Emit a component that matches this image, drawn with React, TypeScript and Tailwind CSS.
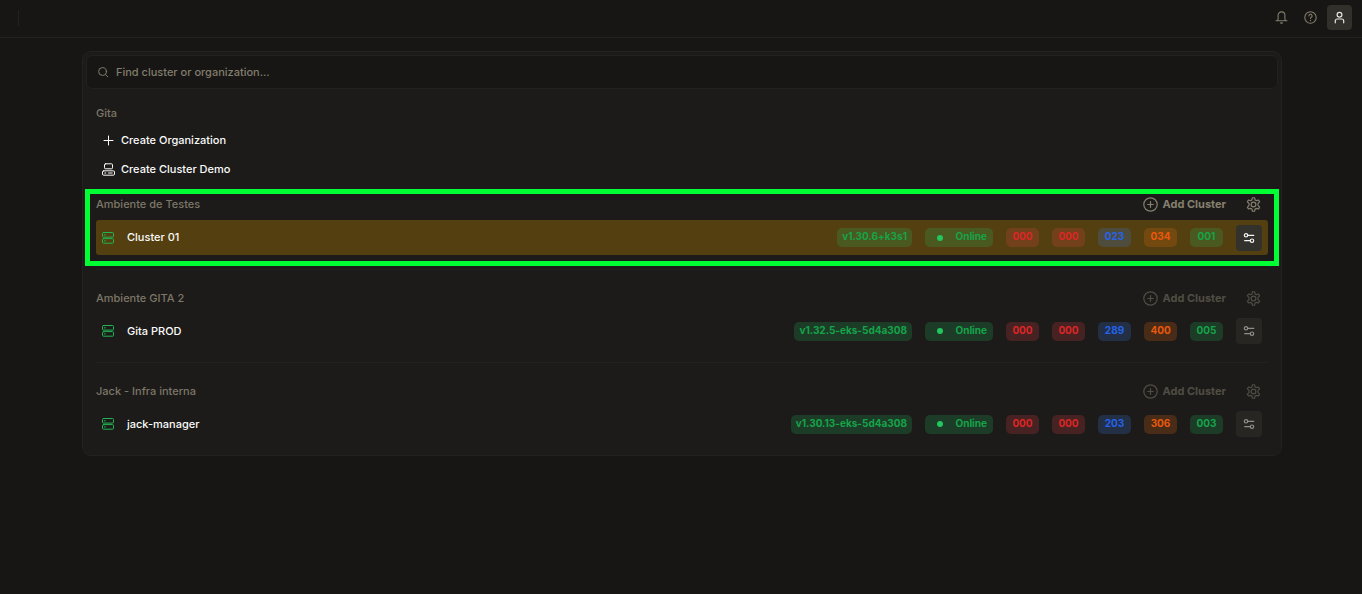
import React from "react";

type IconProps = { className?: string };

const stroke = {
  fill: "none",
  stroke: "currentColor",
  strokeWidth: 1,
  strokeLinecap: "round" as const,
  strokeLinejoin: "round" as const,
  "aria-hidden": true,
};

function BellIcon({ className }: IconProps) {
  return (
    <svg viewBox="0 0 13 13" className={className} {...stroke} strokeWidth={1.1}>
      <path d="M1 9.7h11M2.4 9.6c.5-.6.7-1.3.7-2.2V4.3a3.4 3.4 0 0 1 6.8 0v3.1c0 .9.2 1.6.7 2.2" />
      <path d="M5.9 12h1.2" strokeWidth="1.5" />
    </svg>
  );
}

function HelpIcon({ className }: IconProps) {
  return (
    <svg viewBox="0 0 13 13" className={className} {...stroke} strokeWidth={1.1}>
      <circle cx="6.5" cy="6.5" r="5.7" />
      <path d="M4.9 5a1.6 1.6 0 1 1 2.4 1.3c-.5.3-.8.5-.8 1.1" />
      <path d="M6.5 9.4v.1" strokeWidth="1.3" />
    </svg>
  );
}

function UserIcon({ className }: IconProps) {
  return (
    <svg viewBox="0 0 13 13" className={className} {...stroke} strokeWidth={1.2}>
      <circle cx="6.5" cy="3.7" r="2.4" />
      <path d="M2.3 11.8V10a2 2 0 0 1 2-2h4.4a2 2 0 0 1 2 2v1.8" />
    </svg>
  );
}

function SearchIcon({ className }: IconProps) {
  return (
    <svg viewBox="0 0 12 12" className={className} {...stroke}>
      <circle cx="5.5" cy="5.5" r="3.9" />
      <path d="M8.5 8.5l2.3 2.3" />
    </svg>
  );
}

function PlusIcon({ className }: IconProps) {
  return (
    <svg viewBox="0 0 13 13" className={className} {...stroke}>
      <path d="M6.5 2v9M2 6.5h9" />
    </svg>
  );
}

function ComputerIcon({ className }: IconProps) {
  return (
    <svg viewBox="0 0 13 13" className={className} {...stroke}>
      <rect x="2.5" y="0.8" width="8" height="5" rx="1" />
      <rect x="0.5" y="7.8" width="12" height="4.4" rx="1.2" />
      <path d="M2.8 10h1M6.5 10h3.7" />
    </svg>
  );
}

function ServerIcon({ className }: IconProps) {
  return (
    <svg viewBox="0 0 12 12" className={className} {...stroke}>
      <rect x="0.5" y="0.5" width="11" height="4.6" rx="1" />
      <rect x="0.5" y="6.6" width="11" height="4.6" rx="1" />
      <path d="M2.5 2.8h.8M2.5 8.9h.8" />
    </svg>
  );
}

function CirclePlusIcon({ className }: IconProps) {
  return (
    <svg viewBox="0 0 15 15" className={className} {...stroke} strokeWidth={1.2}>
      <circle cx="7.5" cy="7.5" r="6.7" />
      <path d="M7.5 4.7v5.6M4.7 7.5h5.6" />
    </svg>
  );
}

function GearIcon({ className }: IconProps) {
  return (
    <svg viewBox="0 0 24 24" className={className} {...stroke} strokeWidth={1.9}>
      <path d="M9.5 4.6 10.3 1.2h3.4l.8 3.4 2.2 1.3 3.4-1.1 1.7 3-2.6 2.5v3.4l2.6 2.5-1.7 3-3.4-1.1-2.2 1.3-.8 3.4h-3.4l-.8-3.4-2.2-1.3-3.4 1.1-1.7-3 2.6-2.5v-3.4L2.2 7.8l1.7-3 3.4 1.1z" />
      <circle cx="12" cy="12" r="3.8" />
    </svg>
  );
}

function SlidersIcon({ className }: IconProps) {
  return (
    <svg viewBox="0 0 12 12" className={className} {...stroke} strokeWidth={1.2}>
      <circle cx="3" cy="3.3" r="1.7" />
      <path d="M4.9 3.3h5.9M1.7 8.7h5.4" />
      <circle cx="9" cy="8.7" r="1.7" />
    </svg>
  );
}

const tones = {
  green: "bg-[#22c55e]/20 text-[#16a34a]",
  red: "bg-[#ef4444]/20 text-[#dc2626]",
  blue: "bg-[#3b82f6]/20 text-[#2563eb]",
  orange: "bg-[#f97316]/20 text-[#ea580c]",
};
type Tone = keyof typeof tones;

type BadgeProps = { tone: Tone; className: string; children: React.ReactNode };

function Badge({ tone, className, children }: BadgeProps) {
  return (
    <span
      className={`flex h-[19px] items-center rounded-[5px] pb-0.5 text-[10px] leading-[15px] font-bold ${tones[tone]} ${className}`}
    >
      {children}
    </span>
  );
}

type Cluster = {
  group: string;
  name: string;
  version: string;
  counts: [Tone, string][];
  active?: boolean;
};

const clusters: Cluster[] = [
  {
    group: "Ambiente de Testes",
    name: "Cluster 01",
    version: "v1.30.6+k3s1",
    counts: [["red", "000"], ["red", "000"], ["blue", "023"], ["orange", "034"], ["green", "001"]],
    active: true,
  },
  {
    group: "Ambiente GITA 2",
    name: "Gita PROD",
    version: "v1.32.5-eks-5d4a308",
    counts: [["red", "000"], ["red", "000"], ["blue", "289"], ["orange", "400"], ["green", "005"]],
  },
  {
    group: "Jack - Infra interna",
    name: "jack-manager",
    version: "v1.30.13-eks-5d4a308",
    counts: [["red", "000"], ["red", "000"], ["blue", "203"], ["orange", "306"], ["green", "003"]],
  },
];

function ClusterSection({ cluster }: { cluster: Cluster }) {
  const { active } = cluster;
  return (
    <section className="relative border-b border-[#232220] pb-3.5 last:border-b-0">
      <div className="flex h-6 items-center justify-between pr-[7px]">
        <h2 className="text-[11px] font-medium text-[#7c7768]">{cluster.group}</h2>
        <div className={`flex items-center gap-5 ${active ? "text-[#85806f]" : "text-[#504d44]"}`}>
          <button className="flex items-center gap-1 text-[11px] font-bold">
            <CirclePlusIcon className="size-[15px]" />
            Add Cluster
          </button>
          <button aria-label="Organization settings">
            <GearIcon className="size-[15px]" />
          </button>
        </div>
      </div>
      <div
        className={`mt-1 flex items-center justify-between rounded-[3px] px-1.5 ${
          active ? "h-[35px] bg-[#533f0f]" : "h-[34px]"
        }`}
      >
        <a href="#" className="flex items-center gap-[13px] text-[11px] font-medium text-[#fafaf9]">
          <ServerIcon className="size-3 text-[#22b455]" />
          {cluster.name}
        </a>
        <div className="flex items-center gap-[13px]">
          <Badge tone="green" className="px-[5px]">
            {cluster.version}
          </Badge>
          <Badge tone="green" className="w-[68px] justify-between pr-1.5 pl-3">
            <span className="mt-0.5 size-1.5 rounded-full bg-[#22c55e]" />
            Online
          </Badge>
          <div className="flex items-center gap-[13px]">
            {cluster.counts.map(([tone, value], i) => (
              <Badge key={i} tone={tone} className="w-[33px] justify-center">
                {value}
              </Badge>
            ))}
          </div>
          <button
            aria-label="Cluster options"
            className={`flex size-[26px] items-center justify-center rounded-[4px] ${
              active ? "bg-[#33312c] text-[#f5f5f4]" : "bg-[#272623] text-[#8f8e8b]"
            }`}
          >
            <SlidersIcon className="size-3" />
          </button>
        </div>
      </div>
      {active && (
        <div className="pointer-events-none absolute -inset-x-[11px] -top-[3px] bottom-[3px] border-[5px] border-[#00ff33]" />
      )}
    </section>
  );
}

export default function App() {
  return (
    <div className="min-h-screen bg-[#171614] font-['Inter',sans-serif]">
      <header className="flex h-[38px] items-center justify-between border-b border-[#22211f] pr-2.5 pb-0.5 pl-[18px]">
        <div className="h-4 w-px bg-[#22211f]" />
        <div className="flex items-center gap-4 text-[#827d6d]">
          <button aria-label="Notifications">
            <BellIcon className="size-[13px]" />
          </button>
          <button aria-label="Help">
            <HelpIcon className="size-[13px]" />
          </button>
          <button
            aria-label="Account"
            className="-ml-1.5 flex size-[25px] items-center justify-center rounded-[4px] bg-[#32302b] text-[#e7e5e0]"
          >
            <UserIcon className="size-[13px]" />
          </button>
        </div>
      </header>
      <main className="pt-[13px] pl-0.5">
        <div className="mx-auto max-w-[1200px] rounded-[9px] border border-[#232220] bg-[#1c1b19] p-[3px] pb-0">
          <label className="flex h-[34px] items-center gap-[7px] rounded-[6px] border border-[#22211f] bg-[#171614] px-2.5 text-[#827d6d]">
            <SearchIcon className="size-3" />
            <input
              type="text"
              aria-label="Find cluster or organization"
              placeholder="Find cluster or organization..."
              className="min-w-0 flex-1 bg-transparent text-[11px] font-medium outline-none placeholder:text-[#827d6d]"
            />
          </label>
          <div className="px-2.5 pt-3">
            <h2 className="flex h-6 items-center text-[11px] font-medium text-[#7c7768]">Gita</h2>
            <div className="mt-px px-1.5 text-[11px] font-medium text-[#fafaf9]">
              <button className="flex h-[29px] items-center gap-1.5">
                <PlusIcon className="size-[13px]" />
                Create Organization
              </button>
              <button className="flex h-[29px] items-center gap-1.5">
                <ComputerIcon className="size-[13px]" />
                Create Cluster Demo
              </button>
            </div>
            <div className="mt-2 flex flex-col gap-4">
              {clusters.map((c) => (
                <ClusterSection key={c.group} cluster={c} />
              ))}
            </div>
          </div>
        </div>
      </main>
    </div>
  );
}
